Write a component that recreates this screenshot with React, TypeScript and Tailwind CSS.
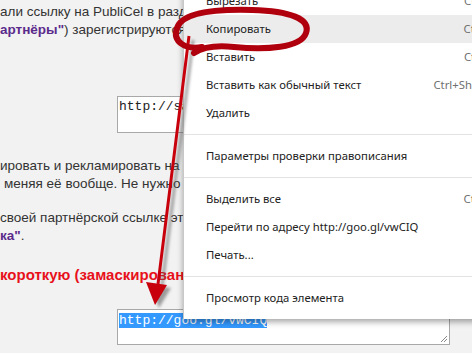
import React from "react";

type Item = { label: string; keys?: string; active?: boolean } | "sep";

const items: Item[] = [
  { label: "Вырезать", keys: "Ctrl+X" },
  { label: "Копировать", keys: "Ctrl+C", active: true },
  { label: "Вставить", keys: "Ctrl+V" },
  { label: "Вставить как обычный текст", keys: "Ctrl+Shift+V" },
  { label: "Удалить" },
  "sep",
  { label: "Параметры проверки правописания" },
  "sep",
  { label: "Выделить все", keys: "Ctrl+A" },
  { label: "Перейти по адресу http://goo.gl/vwCIQ" },
  { label: "Печать..." },
  "sep",
  { label: "Просмотр кода элемента" },
];

function ContextMenu() {
  return (
    <div className="absolute top-[-13px] left-[183px] w-[340px] bg-white border-l border-[#c8c8c8] pb-[7px] shadow-[0_3px_6px_rgba(0,0,0,0.35)] z-10 font-['Noto_Sans',sans-serif] text-[11.3px] text-[#222]">
      {items.map((it, i) =>
        it === "sep" ? (
          <div key={i} className="py-[7px]">
            <div className="h-px bg-[#e3e3e3]" />
          </div>
        ) : (
          <div key={i} className={`flex h-7 items-center justify-between pl-[22px] pr-[27px] ${it.active ? "bg-[#ececec]" : ""}`}>
            <span>{it.label}</span>
            {it.keys && <span className="text-[#707070]">{it.keys}</span>}
          </div>
        )
      )}
    </div>
  );
}

function Overlay() {
  return (
    <svg className="absolute inset-0 z-20 pointer-events-none" width={472} height={353} viewBox="0 0 472 353">
      <defs>
        <filter id="soft" x="-20%" y="-20%" width="140%" height="140%">
          <feGaussianBlur stdDeviation="1.6" />
        </filter>
      </defs>
      {/* arrow shadow */}
      <g filter="url(#soft)" opacity="0.55">
        <line x1="193" y1="40" x2="162" y2="286" stroke="#555" strokeWidth="3" />
        <polygon points="150,285 171,288 159,308" fill="#555" />
      </g>
      <line x1="189" y1="36" x2="158" y2="284" stroke="#c8000c" strokeWidth="3" />
      <polygon points="146,282 167,285 155,305" fill="#c8000c" />
      {/* hand-drawn ring */}
      <path
        d="M202 47 C186 50 172 42 177 28 C182 13 214 9 252 10 C290 11 311 19 306 33 C301 48 266 50 234 47 C216 45 203 47 194 53"
        fill="none"
        stroke="#b0000e"
        strokeWidth="6"
        strokeLinecap="round"
      />
    </svg>
  );
}

export default function App() {
  return (
    <div className="relative w-[472px] h-[353px] overflow-hidden bg-[#f2f2f2] font-['Liberation_Sans',Arial,sans-serif] text-[13.5px] leading-[18px] text-[#333]">
      <div className="pt-[3px] whitespace-nowrap">
        <div>али ссылку на PubliCel в разделе "Мои партнёры" и по</div>
        <div>
          <b className="text-[#5b2b8c]">артнёры"</b>) зарегистрируются на сайте, то вы получите
        </div>
        <div className="mt-[57px] ml-[117px] h-[37px] w-[400px] border border-[#a8a8a8] bg-white px-[1px] pt-[2px] font-['Liberation_Mono',monospace] text-[13px] leading-[15px] text-[#222]">
          http://sayt.ru/?ref=1234
        </div>
        <div className="mt-[24px]">ировать и рекламировать на любых сайтах и форумах,</div>
        <div className="ml-[4px]">меняя её вообще. Не нужно ничего дописывать.</div>
        <div className="mt-[16px]">своей партнёрской ссылке это можно сделать в разделе</div>
        <div>
          <b className="text-[#5b2b8c]">ка"</b>.
        </div>
        <div className="mt-[21px] font-bold text-[15px] text-[#e8101a]">короткую (замаскированную) ссылку на сайт</div>
        <div className="relative mt-[25px] ml-[117px] h-[36px] w-[333px] border border-[#a8a8a8] bg-white px-[1px] pt-[3px] font-['Liberation_Mono',monospace] text-[13px] leading-[15px]">
          <span className="bg-[#3399ff] text-white">http://goo.gl/vwCIQ</span>
          <svg className="absolute right-[1px] bottom-[1px]" width="8" height="8" viewBox="0 0 8 8">
            <line x1="7" y1="1" x2="1" y2="7" stroke="#888" strokeWidth="1" />
            <line x1="7" y1="4" x2="4" y2="7" stroke="#888" strokeWidth="1" />
          </svg>
        </div>
      </div>
      <ContextMenu />
      <Overlay />
    </div>
  );
}
